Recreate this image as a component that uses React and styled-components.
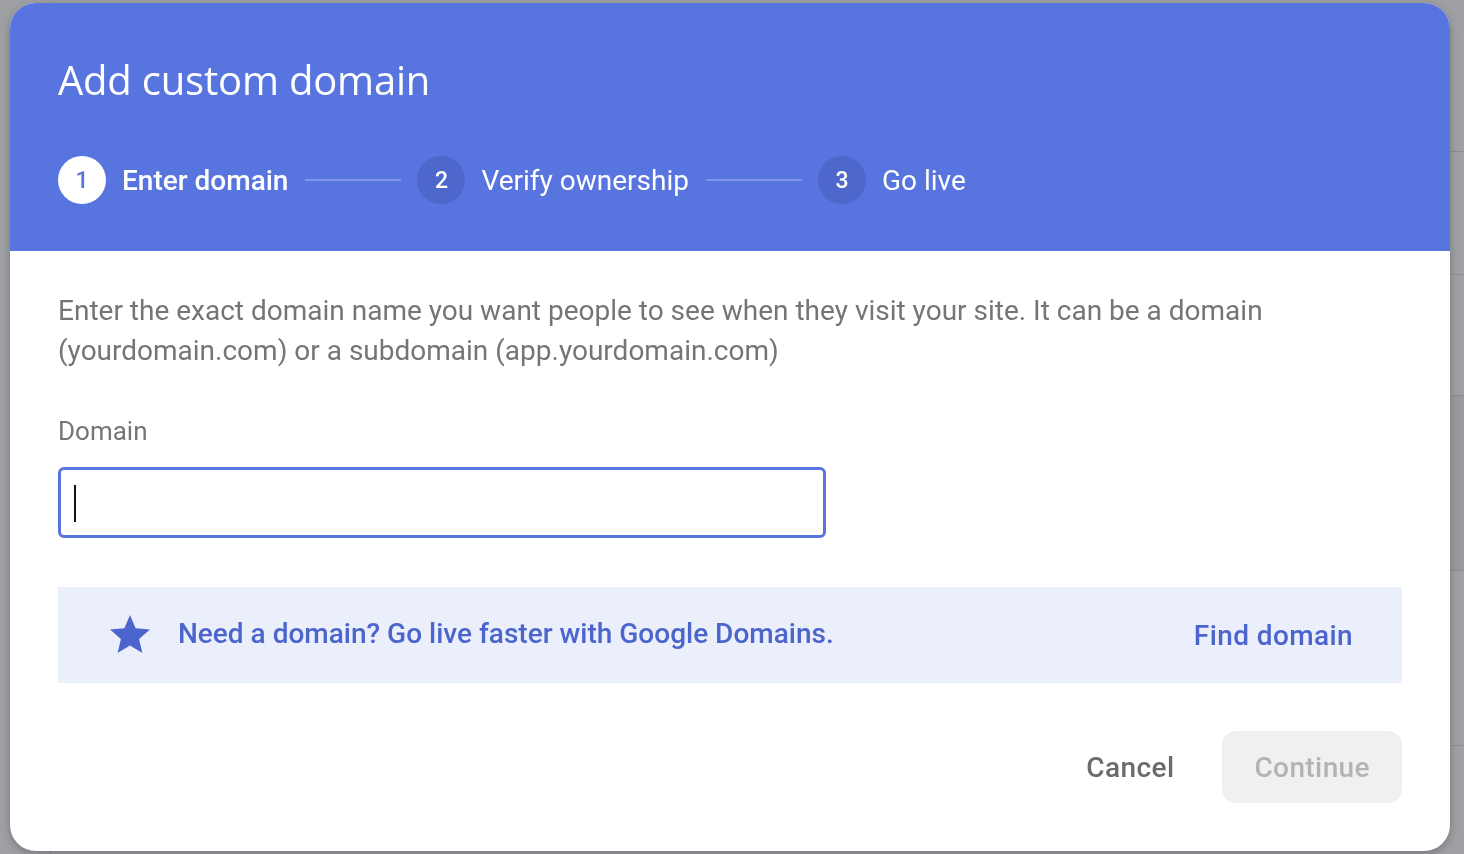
import React from "react";
import styled, { createGlobalStyle } from "styled-components";

const GlobalStyle = createGlobalStyle`
  html, body {
    margin: 0;
    height: 100%;
    overflow: hidden;
    background: #9fa0a4;
    font-family: Roboto, "Liberation Sans", sans-serif;
  }
`

const Backdrop = styled.div`
  display: flex;
  width: 100vw;
  height: 100vh;
`
const SideRail = styled.div`
  width: 50px;
  border-right: 1px solid #8f9094;
`
const PageRows = styled.div`
  flex: 1;
  display: flex;
  flex-direction: column;
`
const PageRow = styled.div`
  height: ${p => p.h}px;
  background: ${p => p.dark ? "#999a9e" : "#9fa0a4"};
  border-bottom: 1px solid #8c8d91;
`

const Dialog = styled.div`
  position: fixed;
  top: 3px;
  left: 10px;
  width: 1440px;
  height: 848px;
  background: #fff;
  border-radius: 26px;
  overflow: hidden;
  display: flex;
  flex-direction: column;
  box-shadow: 0 3px 8px rgba(0,0,0,0.25);
`
const Header = styled.div`
  background: #5874df;
  padding: 51px 48px 47px;
  display: flex;
  flex-direction: column;
  gap: 50px;
`
const Title = styled.h1`
  margin: 0;
  font-family: "Open Sans", "Liberation Sans", sans-serif;
  font-weight: 400;
  font-size: 40px;
  line-height: 52px;
  color: #fff;
  letter-spacing: -0.2px;
`
const Steps = styled.div`
  display: flex;
  align-items: center;
  height: 48px;
`
const StepCircle = styled.div`
  width: 48px;
  height: 48px;
  border-radius: 50%;
  display: flex;
  align-items: center;
  justify-content: center;
  font-size: 23px;
  font-weight: 500;
  background: ${p => p.active ? "#fff" : "#4e67cc"};
  color: ${p => p.active ? "#5874df" : "#fff"};
`
const StepLabel = styled.span`
  margin-left: 16px;
  font-size: 28px;
  font-weight: ${p => p.active ? 500 : 400};
  color: #fff;
`
const Connector = styled.div`
  width: 96px;
  height: 2px;
  margin: 0 16px 0 17px;
  background: #7f95ea;
`

const Body = styled.div`
  flex: 1;
  padding: 40px 48px 48px;
  display: flex;
  flex-direction: column;
`
const Intro = styled.p`
  margin: 0;
  font-size: 28px;
  line-height: 40px;
  color: #757575;
`
const FieldLabel = styled.label`
  margin-top: 40px;
  font-size: 26px;
  line-height: 40px;
  color: #757575;
`
const Field = styled.div`
  position: relative;
  margin-top: 16px;
  width: 768px;
  height: 71px;
`
const Input = styled.input`
  box-sizing: border-box;
  width: 100%;
  height: 100%;
  border: 3px solid #5874df;
  border-radius: 6px;
  padding: 0 14px;
  font: 26px Roboto, sans-serif;
  caret-color: transparent;
  outline: none;
`
const Caret = styled.span`
  position: absolute;
  left: 16px;
  top: 18px;
  width: 2px;
  height: 37px;
  background: #111;
`
const Banner = styled.div`
  margin-top: 49px;
  height: 96px;
  background: #ebeffb;
  display: flex;
  align-items: center;
  padding: 0 49px 0 48px;
  color: #4b65cd;
`
const BannerText = styled.span`
  flex: 1;
  margin-left: 24px;
  margin-top: -4px;
  font-size: 28px;
  font-weight: 500;
`
const LinkButton = styled.button`
  border: none;
  background: none;
  padding: 0;
  font-family: Roboto, sans-serif;
  font-size: 28px;
  font-weight: 500;
  letter-spacing: 0.4px;
  color: #4b65cd;
  cursor: pointer;
`
const Footer = styled.div`
  margin-top: 48px;
  display: flex;
  justify-content: flex-end;
  gap: 24px;
`
const FooterButton = styled.button`
  height: 72px;
  border: none;
  border-radius: 14px;
  padding: 0 ${p => p.filled ? 32 : 24}px;
  background: ${p => p.filled ? "#f0f0f0" : "transparent"};
  color: ${p => p.filled ? "#b3b3b3" : "#6b6b6b"};
  font-family: Roboto, sans-serif;
  font-size: 28px;
  font-weight: 500;
  letter-spacing: 0.4px;
  cursor: pointer;
`

const steps = ["Enter domain", "Verify ownership", "Go live"]

function StarIcon() {
  return (
    <svg width="48" height="48" viewBox="0 0 24 24" fill="currentColor">
      <path d="M12 17.27L18.18 21l-1.64-7.03L22 9.24l-7.19-.61L12 2 9.19 8.63 2 9.24l5.46 4.73L5.82 21z" />
    </svg>
  )
}

function App() {
  return (
    <>
      <GlobalStyle />
      <Backdrop>
        <SideRail />
        <PageRows>
          <PageRow h={151} />
          <PageRow h={122} />
          <PageRow h={120} />
          <PageRow h={174} dark />
          <PageRow h={174} />
        </PageRows>
      </Backdrop>
      <Dialog>
        <Header>
          <Title>Add custom domain</Title>
          <Steps>
            {steps.map((s, i) => (
              <React.Fragment key={s}>
                {i > 0 && <Connector />}
                <StepCircle active={i === 0}>{i + 1}</StepCircle>
                <StepLabel active={i === 0}>{s}</StepLabel>
              </React.Fragment>
            ))}
          </Steps>
        </Header>
        <Body>
          <Intro>
            Enter the exact domain name you want people to see when they visit your site. It can be a domain
            (yourdomain.com) or a subdomain (app.yourdomain.com)
          </Intro>
          <FieldLabel>Domain</FieldLabel>
          <Field>
            <Input />
            <Caret />
          </Field>
          <Banner>
            <StarIcon />
            <BannerText>Need a domain? Go live faster with Google Domains.</BannerText>
            <LinkButton>Find domain</LinkButton>
          </Banner>
          <Footer>
            <FooterButton>Cancel</FooterButton>
            <FooterButton filled>Continue</FooterButton>
          </Footer>
        </Body>
      </Dialog>
    </>
  );
}

export default App;
